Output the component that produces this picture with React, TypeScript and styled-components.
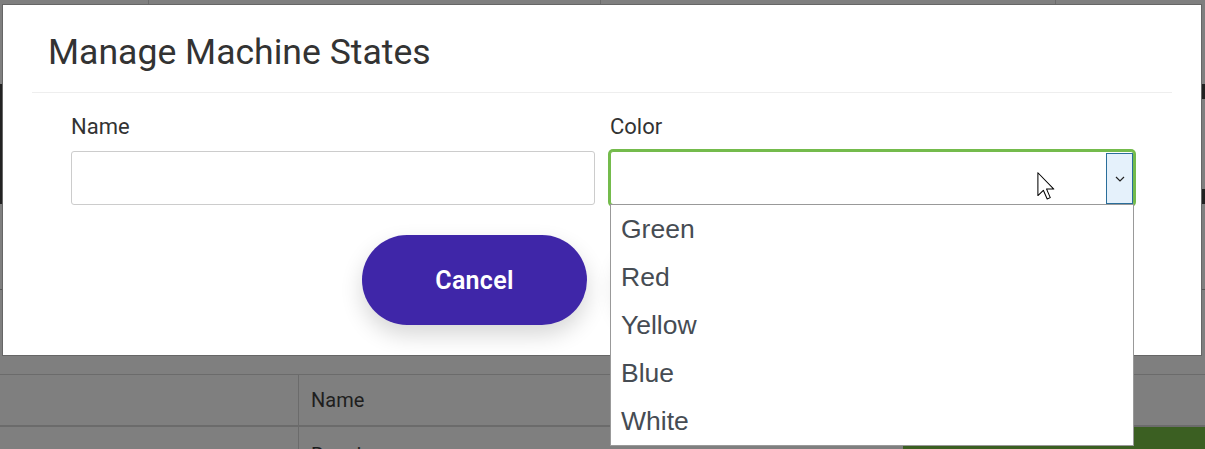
import styled, { createGlobalStyle } from 'styled-components'

const GlobalStyle = createGlobalStyle`
  html, body {
    margin: 0;
    padding: 0;
    background: #7f7f7f;
    overflow: hidden;
  }
  * {
    box-sizing: border-box;
  }
`

const Page = styled.div`
  position: relative;
  width: 1205px;
  height: 449px;
  overflow: hidden;
  background: #7f7f7f;
  font-family: Roboto, 'Liberation Sans', sans-serif;
`

// --- dimmed page behind the modal ---

const TopRow = styled.div`
  display: grid;
  grid-template-columns: 148px 452px 455px 1fr;
  height: 102px;
  margin-top: -18px;
`

const TopCell = styled.div<{ $first?: boolean }>`
  border-left: ${(p) => (p.$first ? 'none' : '1px solid #6b6b6b')};
  padding: 0 12px;
  font-size: 20px;
  line-height: 20px;
  color: #1c1c1c;
`

const Band = styled.div`
  height: 120px;
  border-top: 15px solid #222;
  border-bottom: 15px solid #222;
  box-shadow: inset 3px 0 0 #222;
`

const Section = styled.div`
  height: 86px;
  border-bottom: 1px solid #555;
`

const TableHead = styled.div`
  margin-top: 84px;
  display: grid;
  grid-template-columns: 299px 1fr;
  height: 53px;
  border-top: 1px solid #6b6b6b;
  border-bottom: 2px solid #6b6b6b;
`

const HeadCell = styled.div<{ $first?: boolean }>`
  border-right: ${(p) => (p.$first ? '1px solid #6b6b6b' : 'none')};
  padding: 0 12px;
  display: flex;
  align-items: center;
  font-size: 20px;
  color: #1e1e1e;
`

const TableRow = styled.div`
  display: grid;
  grid-template-columns: 299px 604px 1fr;
  height: 60px;
`

const RowCell = styled.div<{ $tone?: 'green' | 'plain'; $first?: boolean }>`
  background: ${(p) => (p.$tone === 'green' ? '#3b5f22' : 'transparent')};
  border-right: ${(p) => (p.$first ? '1px solid #6b6b6b' : 'none')};
  padding: 16px 12px 0;
  font-size: 20px;
  color: #1e1e1e;
`

// --- modal ---

const Modal = styled.div`
  position: absolute;
  left: 2px;
  top: 4px;
  width: 1200px;
  height: 352px;
  background: #fff;
  border: 1px solid #666;
  display: flex;
  flex-direction: column;
`

const ModalHeader = styled.div`
  margin: 0 29px;
  padding: 26px 14px 19px 16px;
  border-bottom: 1px solid #eee;
`

const Title = styled.h2`
  margin: 0;
  font-size: 35.6px;
  line-height: 42px;
  font-weight: 400;
  color: #333;
`

const ModalBody = styled.div`
  padding: 21px 0 0 68px;
`

const FieldGrid = styled.div`
  display: grid;
  grid-template-columns: 524px 524px;
  column-gap: 15px;
`

const Field = styled.div`
  position: relative;
  display: flex;
  flex-direction: column;
`

const Label = styled.label`
  font-size: 22px;
  line-height: 26px;
  color: #333;
  margin-bottom: 11px;
`

const TextInput = styled.input`
  height: 54px;
  border: 1px solid #ccc;
  border-radius: 3px;
  font-size: 20px;
  padding: 0 12px;
  outline: none;
`

const SelectBox = styled.div`
  height: 54px;
  border: 1px solid #74bb4c;
  border-radius: 3px;
  box-shadow: 0 0 0 2px #74bb4c;
  display: flex;
  justify-content: flex-end;
  padding: 1px 0 0;
  background: #fff;
`

const SelectButton = styled.div`
  width: 27px;
  background: #e5f1fb;
  border: 1px solid #2a6e9a;
  display: flex;
  align-items: center;
  justify-content: center;
`

const OptionList = styled.ul`
  position: absolute;
  left: 0;
  top: calc(100% - 1px);
  width: 524px;
  margin: 0;
  padding: 0;
  list-style: none;
  background: #fff;
  border: 1px solid #999;
  z-index: 2;
`

const OptionItem = styled.li`
  height: 48px;
  line-height: 48px;
  padding-left: 10px;
  font-family: 'Liberation Sans', Arial, sans-serif;
  font-size: 26.5px;
  color: #464c53;
`

const Footer = styled.div`
  display: flex;
  justify-content: center;
  gap: 30px;
  padding-top: 30px;
`

const PillButton = styled.button`
  width: 225px;
  height: 90px;
  border: none;
  border-radius: 45px;
  background: #3f26a8;
  color: #fff;
  font-family: Roboto, 'Liberation Sans', sans-serif;
  font-size: 25px;
  font-weight: 600;
  letter-spacing: 0.3px;
  box-shadow: 0 10px 22px rgba(0, 0, 0, 0.16);
  cursor: pointer;
`

const Cursor = styled.svg`
  position: absolute;
  left: 1037px;
  top: 172px;
  z-index: 5;
`

const colors = ['Green', 'Red', 'Yellow', 'Blue', 'White']

export default function App() {
  return (
    <>
      <GlobalStyle />
      <Page>
        <TopRow>
          <TopCell $first />
          <TopCell>Flakes holes in donuts</TopCell>
          <TopCell>2</TopCell>
          <TopCell />
        </TopRow>
        <Band />
        <Section />
        <TableHead>
          <HeadCell $first />
          <HeadCell>Name</HeadCell>
        </TableHead>
        <TableRow>
          <RowCell $first />
          <RowCell>Running</RowCell>
          <RowCell $tone="green" />
        </TableRow>

        <Modal>
          <ModalHeader>
            <Title>Manage Machine States</Title>
          </ModalHeader>
          <ModalBody>
            <FieldGrid>
              <Field>
                <Label>Name</Label>
                <TextInput type="text" />
              </Field>
              <Field>
                <Label>Color</Label>
                <SelectBox>
                  <SelectButton>
                    <svg width="10" height="6" viewBox="0 0 10 6">
                      <polyline
                        points="1,1 5,5 9,1"
                        fill="none"
                        stroke="#222"
                        strokeWidth="1.2"
                      />
                    </svg>
                  </SelectButton>
                </SelectBox>
                <OptionList>
                  {colors.map((c) => (
                    <OptionItem key={c}>{c}</OptionItem>
                  ))}
                </OptionList>
              </Field>
            </FieldGrid>
          </ModalBody>
          <Footer>
            <PillButton>Cancel</PillButton>
            <PillButton>Save</PillButton>
          </Footer>
        </Modal>

        <Cursor width="18" height="28" viewBox="0 0 12 19">
          <path
            d="M0.5 0.5 L0.5 16 L4.2 12.4 L6.8 18.3 L8.9 17.4 L6.4 11.6 L11.3 11.6 Z"
            fill="#fff"
            stroke="#000"
            strokeWidth="0.7"
            strokeLinejoin="round"
          />
        </Cursor>
      </Page>
    </>
  )
}
